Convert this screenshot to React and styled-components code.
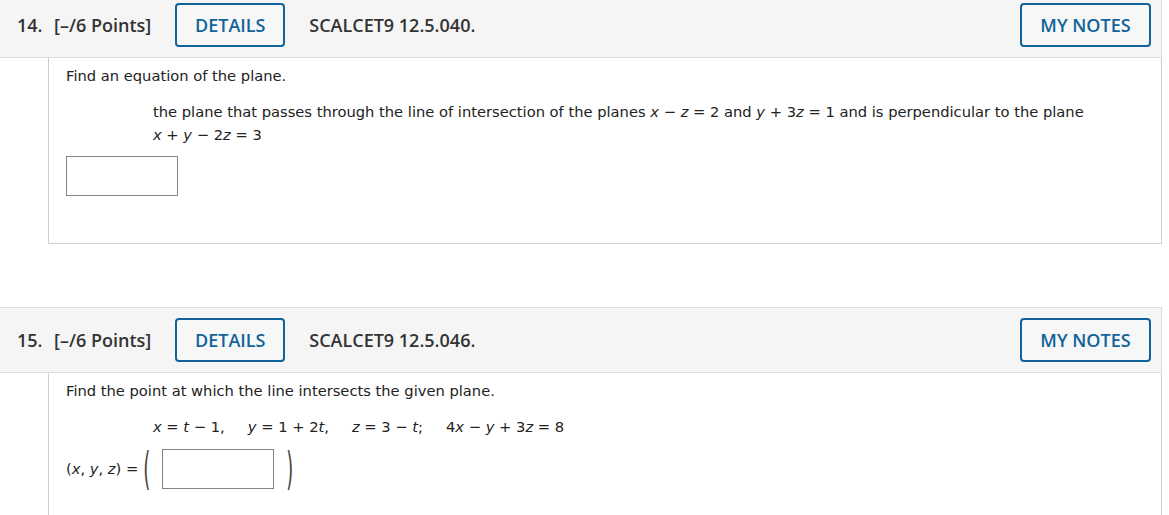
import React from 'react'
import styled, { createGlobalStyle } from 'styled-components'

const GlobalStyle = createGlobalStyle`
  body {
    margin: 0;
    background: #ffffff;
    font-family: "DejaVu Sans", Verdana, sans-serif;
    color: #222;
  }
`

const Page = styled.div`
  width: 1169px;
  margin-top: -8px;
`

const Question = styled.section`
  width: 1162px;
  margin-bottom: ${p => p.$gap || 0}px;
`

const Header = styled.div`
  display: flex;
  align-items: center;
  height: 64px;
  padding-left: 17px;
  padding-right: 10px;
  background: #f5f5f5;
  border: 1px solid #dcdcdc;
  border-left: none;
  font-family: "Open Sans", "Noto Sans", sans-serif;
  font-size: 18px;
  font-weight: 600;
  color: #333;
`

const Num = styled.span`
  width: 37px;
`

const Points = styled.span`
  margin-right: 24px;
`

const Ref = styled.span`
  flex: 1;
  margin-left: 24px;
`

const OutlineButton = styled.button`
  box-sizing: border-box;
  height: 44px;
  width: ${p => p.$w}px;
  margin-top: -1px;
  border: 2px solid #11639a;
  border-radius: 4px;
  background: #f7f7f7;
  color: #11639a;
  font-family: "Open Sans", "Noto Sans", sans-serif;
  font-size: 18px;
  font-weight: 600;
  padding: 0;
`

const Body = styled.div`
  margin-left: 48px;
  border: 1px solid #cfcfcf;
  border-top: none;
  background: #fff;
  padding: 9px 17px ${p => p.$bottom || 0}px;
  font-size: 14.7px;
  line-height: 18px;
`

const Para = styled.p`
  margin: 0 0 ${p => p.$after}px;
`

const Prompt = styled.div`
  margin-left: 87px;
  line-height: 23px;
  margin-bottom: ${p => p.$after}px;
`

const V = styled.i`
  font-style: italic;
`

const Part = styled.span`
  margin-right: 23px;
  &:last-child { margin-right: 0; }
`

const AnswerBox = styled.div`
  box-sizing: border-box;
  width: 112px;
  height: 40px;
  border: 1px solid #858585;
  background: #fff;
`

const AnswerRow = styled.div`
  display: flex;
  align-items: center;
  height: 48px;
`

const Label = styled.span`
  margin-right: 2px;
`

const Paren = styled.span`
  display: inline-block;
  font-size: 18px;
  line-height: 18px;
  color: #444;
  transform: scale(1, 2.5);
  margin: 0 ${p => p.$r ? 0 : 12}px 0 ${p => p.$r ? 12 : 3}px;
`

export default function App() {
  return (
    <Page>
      <GlobalStyle />
      <Question $gap={63}>
        <Header>
          <Num>14.</Num>
          <Points>[–/6 Points]</Points>
          <OutlineButton $w={110}>DETAILS</OutlineButton>
          <Ref>SCALCET9 12.5.040.</Ref>
          <OutlineButton $w={131}>MY NOTES</OutlineButton>
        </Header>
        <Body $bottom={47}>
          <Para $after={15}>Find an equation of the plane.</Para>
          <Prompt $after={10}>
            the plane that passes through the line of intersection of the planes{' '}
            <V>x</V> − <V>z</V> = 2 and <V>y</V> + 3<V>z</V> = 1 and is perpendicular to the plane
            <br />
            <V>x</V> + <V>y</V> − 2<V>z</V> = 3
          </Prompt>
          <AnswerBox />
        </Body>
      </Question>

      <Question>
        <Header>
          <Num>15.</Num>
          <Points>[–/6 Points]</Points>
          <OutlineButton $w={110}>DETAILS</OutlineButton>
          <Ref>SCALCET9 12.5.046.</Ref>
          <OutlineButton $w={131}>MY NOTES</OutlineButton>
        </Header>
        <Body $bottom={40}>
          <Para $after={15}>Find the point at which the line intersects the given plane.</Para>
          <Prompt $after={7}>
            <Part><V>x</V> = <V>t</V> − 1,</Part>
            <Part><V>y</V> = 1 + 2<V>t</V>,</Part>
            <Part><V>z</V> = 3 − <V>t</V>;</Part>
            <Part>4<V>x</V> − <V>y</V> + 3<V>z</V> = 8</Part>
          </Prompt>
          <AnswerRow>
            <Label>(<V>x</V>, <V>y</V>, <V>z</V>) =</Label>
            <Paren>(</Paren>
            <AnswerBox />
            <Paren $r>)</Paren>
          </AnswerRow>
        </Body>
      </Question>
    </Page>
  )
}
